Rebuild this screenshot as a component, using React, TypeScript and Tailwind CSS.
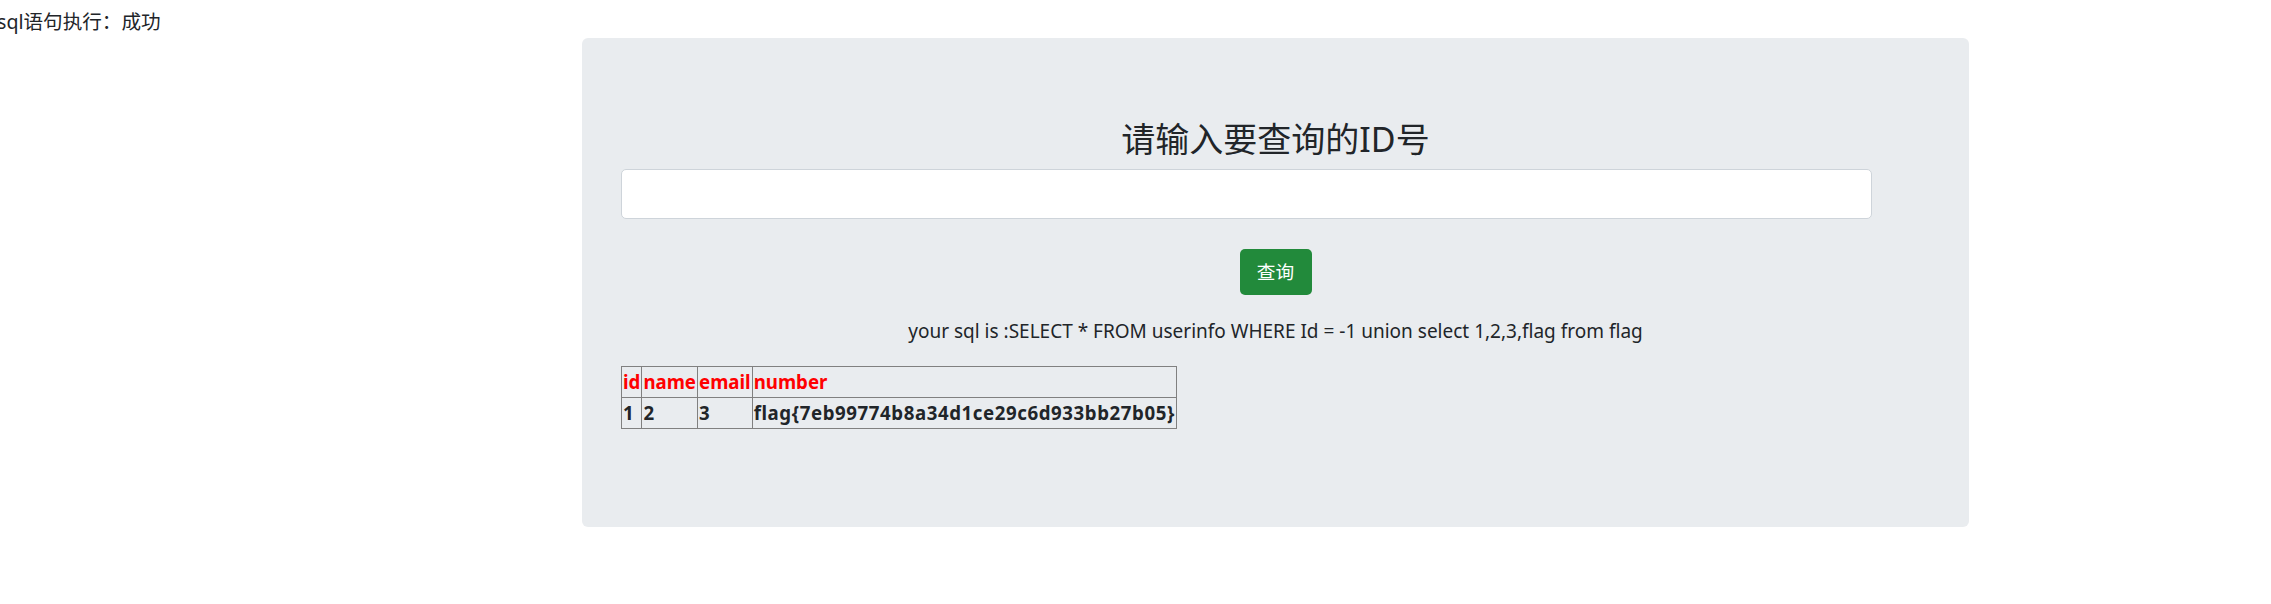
import React from "react";

export default function App() {
  return (
    <div className="min-h-[604px] w-full bg-white text-[#212529] [font-family:'Noto_Sans','Noto_Sans_CJK_SC',sans-serif]">
      <div className="-ml-[3px] pt-[8px] text-[19.6px] leading-[28px]">sql语句执行：成功</div>
      <div className="ml-[582px] mt-[2px] flex h-[489px] w-[1387px] flex-col rounded-[6px] bg-[#e9ecef]">
        <h2 className="pt-[80px] text-center text-[34px] font-normal leading-[42px]">请输入要查询的ID号</h2>
        <input
          type="text"
          className="ml-[39px] mt-[9px] h-[50px] w-[1251px] rounded-[5px] border border-[#ced4da] bg-white px-3 outline-none"
        />
        <button className="mt-[30px] h-[46px] w-[72px] self-center rounded-[5px] bg-[#228a3b] text-[18.67px] leading-[28px] text-white">
          查询
        </button>
        <p className="mt-[22px] text-center text-[19px] leading-[28px]">
          your sql is :SELECT * FROM userinfo WHERE Id = -1 union select 1,2,3,flag from flag
        </p>
        <table className="ml-[39px] mt-[21px] w-fit border-collapse border border-[#808080] text-[18.67px] font-bold leading-[30px]">
          <tbody>
            <tr className="text-[#ff0000]">
              <td className="border border-[#808080] px-[1px]">id</td>
              <td className="border border-[#808080] px-[1px]">name</td>
              <td className="border border-[#808080] px-[1px]">email</td>
              <td className="border border-[#808080] px-[1px]">number</td>
            </tr>
            <tr>
              <td className="border border-[#808080] px-[1px]">1</td>
              <td className="border border-[#808080] px-[1px]">2</td>
              <td className="border border-[#808080] px-[1px]">3</td>
              <td className="border border-[#808080] px-[1px] tracking-[0.58px]">flag{"{"}7eb99774b8a34d1ce29c6d933bb27b05{"}"}</td>
            </tr>
          </tbody>
        </table>
      </div>
    </div>
  );
}
